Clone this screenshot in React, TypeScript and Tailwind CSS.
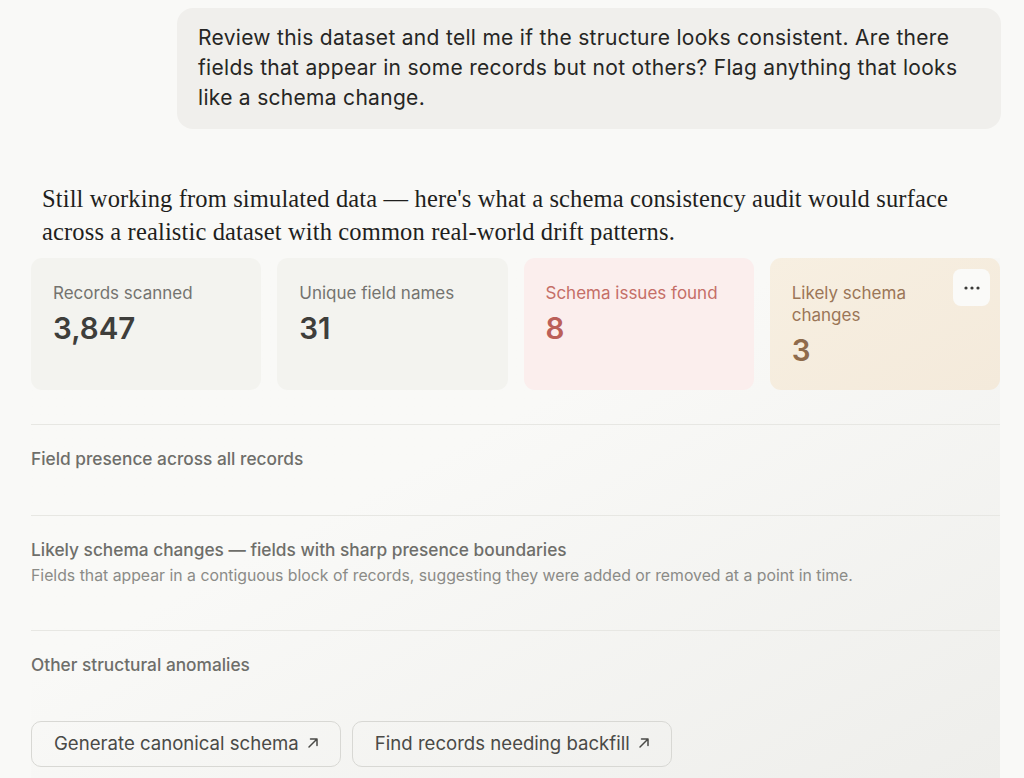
import React from "react";

const sans = "font-['Inter','Noto_Sans',sans-serif]";

type Stat = {
  label: string;
  value: string;
  box: string;
  labelColor: string;
  valueColor: string;
  menu?: boolean;
};

const stats: Stat[] = [
  {
    label: "Records scanned",
    value: "3,847",
    box: "bg-[#f3f3ef]",
    labelColor: "text-[#74736f]",
    valueColor: "text-[#3e3e3b]",
  },
  {
    label: "Unique field names",
    value: "31",
    box: "bg-[#f3f3ef]",
    labelColor: "text-[#74736f]",
    valueColor: "text-[#3e3e3b]",
  },
  {
    label: "Schema issues found",
    value: "8",
    box: "bg-[#fbeeed]",
    labelColor: "text-[#c56e67]",
    valueColor: "text-[#bb6059]",
  },
  {
    label: "Likely schema changes",
    value: "3",
    box: "bg-gradient-to-br from-[#f7efe1] to-[#f4eadb]",
    labelColor: "text-[#9b7657]",
    valueColor: "text-[#8f6b4c]",
    menu: true,
  },
];

function ArrowUpRight() {
  return (
    <svg width="12" height="12" viewBox="0 0 12 12" fill="none" className="ml-[8px] mt-[-3px]">
      <path d="M2 10 L10 2 M3.5 2 H10 V8.5" stroke="#4a4a47" strokeWidth="1.5" strokeLinecap="round" strokeLinejoin="round" />
    </svg>
  );
}

function StatCard({ s }: { s: Stat }) {
  return (
    <div className={`relative h-[132px] rounded-[11px] pl-[22px] pt-[24px] ${s.menu ? "pr-[76px]" : "pr-[8px]"} ${s.box}`}>
      <div className={`text-[17px] leading-[22px] ${s.labelColor}`}>{s.label}</div>
      <div className={`mt-[6px] text-[29.5px] leading-[36px] font-semibold ${s.valueColor}`}>{s.value}</div>
      {s.menu && (
        <button className="absolute right-[10px] top-[11px] flex h-[37px] w-[37px] items-center justify-center rounded-[8px] bg-[#fafaf8]">
          <svg width="18" height="4" viewBox="0 0 18 4">
            <circle cx="3" cy="2" r="1.6" fill="#3a3a38" />
            <circle cx="9" cy="2" r="1.6" fill="#3a3a38" />
            <circle cx="15" cy="2" r="1.6" fill="#3a3a38" />
          </svg>
        </button>
      )}
    </div>
  );
}

function Section({ title, note }: { title: string; note?: string }) {
  return (
    <div className="border-t border-[#e7e7e3] pt-[22px] pb-[44px]">
      <div className="text-[17.3px] leading-[24px] font-medium text-[#6e6e6a]">{title}</div>
      {note && <div className="mt-[4px] text-[15.8px] leading-[20px] text-[#8b8b87]">{note}</div>}
    </div>
  );
}

export default function App() {
  return (
    <div className={`h-[778px] w-[1024px] overflow-hidden bg-[#f9f9f7] ${sans}`}>
      <div className="flex justify-end pr-[23px] pt-[8px]">
        <div className="w-[824px] rounded-[16px] bg-[#f0efec] px-[21px] pt-[15px] pb-[16px] text-[21px] leading-[30px] tracking-[0.3px] text-[#262624]">
          Review this dataset and tell me if the structure looks consistent. Are there fields that appear in some records but not others? Flag anything that looks like a schema change.
        </div>
      </div>

      <p className="ml-[42px] w-[930px] mt-[53px] font-['Liberation_Serif','DejaVu_Serif',serif] text-[24.5px] leading-[33px] tracking-[0.14px] text-[#1f1f1d]">
        Still working from simulated data — here's what a schema consistency audit would surface across a realistic dataset with common real-world drift patterns.
      </p>

      <div className="ml-[31px] mt-[10px] w-[969px] bg-gradient-to-br from-[#f9f9f7] from-40% to-[#eeeeeb]">
        <div className="grid grid-cols-4 gap-[16px]">
          {stats.map((s) => (
            <StatCard key={s.label} s={s} />
          ))}
        </div>

        <div className="mt-[34px]">
          <Section title="Field presence across all records" />
          <Section
            title="Likely schema changes — fields with sharp presence boundaries"
            note="Fields that appear in a contiguous block of records, suggesting they were added or removed at a point in time."
          />
          <Section title="Other structural anomalies" />
        </div>

        <div className="flex gap-[11px] pb-[12px]">
          <button className="flex h-[46px] items-center rounded-[10px] border border-[#d8d8d4] pl-[22px] pr-[21px] text-[18.6px] text-[#4a4a47]">
            Generate canonical schema
            <ArrowUpRight />
          </button>
          <button className="flex h-[46px] items-center rounded-[10px] border border-[#d8d8d4] pl-[22px] pr-[21px] text-[18.6px] text-[#4a4a47]">
            Find records needing backfill
            <ArrowUpRight />
          </button>
        </div>
      </div>
    </div>
  );
}
